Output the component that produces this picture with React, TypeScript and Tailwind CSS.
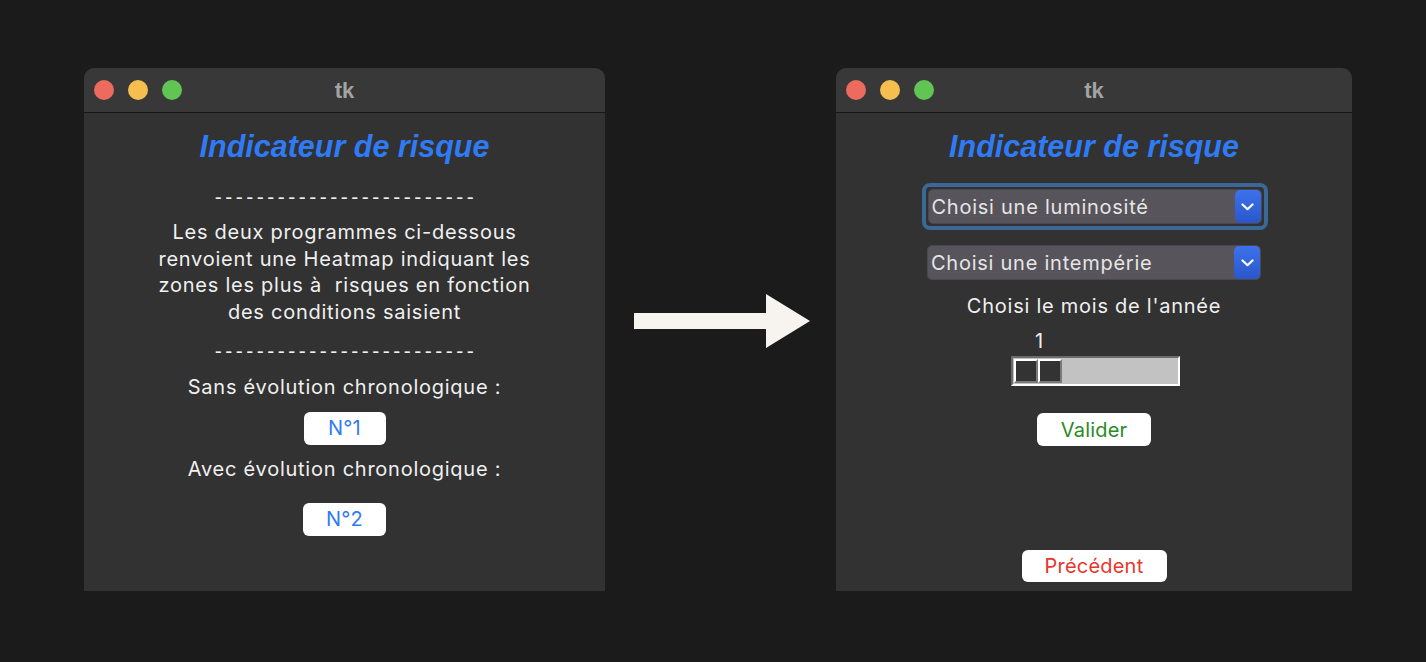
import React from 'react';

const sysFont = "font-['Inter','Liberation_Sans',sans-serif] tracking-[0.75px]";
const btnFont = "font-['Inter','Liberation_Sans',sans-serif] tracking-[0.2px]";

const TitleBar = ({ title }: { title: string }) => (
  <div className="relative h-[45px] flex items-center bg-[#383838] rounded-t-[10px] border-b border-[#161616]">
    <div className="flex items-center gap-[14px] pl-[10px]">
      <span className="w-[20px] h-[20px] rounded-full bg-[#ed6a5e]" />
      <span className="w-[20px] h-[20px] rounded-full bg-[#f5bf4f]" />
      <span className="w-[20px] h-[20px] rounded-full bg-[#61c554]" />
    </div>
    <div className="absolute inset-0 flex items-center justify-center pointer-events-none">
      <span className="font-['Liberation_Sans',sans-serif] font-bold text-[22px] text-[#a3a3a3]">{title}</span>
    </div>
  </div>
);

const Heading = () => (
  <div className="h-[36px] leading-[36px] font-['Liberation_Sans',sans-serif] font-bold italic text-[30.5px] text-[#2f7bf5]">
    Indicateur de risque
  </div>
);

const Dashes = ({ className = '' }: { className?: string }) => (
  <div className={`h-[27px] leading-[27px] text-[21px] text-[#f0f0f0] tracking-[3.5px] pl-[3px] font-['Liberation_Sans',sans-serif] ${className}`}>
    -------------------------
  </div>
);

const TkButton = ({ label, color, w, h = 'h-[33px]', className = '' }: { label: string; color: string; w: string; h?: string; className?: string }) => (
  <button className={`${w} ${h} bg-white rounded-[6px] text-[20px] ${color} ${btnFont} ${className}`}>
    {label}
  </button>
);

const Chevron = () => (
  <svg width="13" height="8" viewBox="0 0 13 8" fill="none">
    <path d="M1.5 1.5 L6.5 6.2 L11.5 1.5" stroke="white" strokeWidth="2.2" strokeLinecap="round" strokeLinejoin="round" />
  </svg>
);

const Combo = ({ label }: { label: string }) => (
  <div className="w-[334px] h-[35px] flex items-center bg-[#57545b] rounded-[5px] border border-[#4a474e]">
    <span className={`flex-1 pl-[3px] text-[20px] text-[#e6e6e6] ${sysFont}`}>{label}</span>
    <div className="w-[26px] h-full rounded-[5px] bg-gradient-to-b from-[#3d72ec] to-[#2a57cb] flex items-center justify-center">
      <Chevron />
    </div>
  </div>
);

const Thumb = () => (
  <div className="w-[24px] border-t-[2px] border-l-[2px] border-t-white border-l-white border-b-[2px] border-r-[2px] border-b-[#7a7a7a] border-r-[#7a7a7a] bg-[#333333]" />
);

const MonthScale = () => (
  <div className="w-[169px] flex flex-col ml-[3px]">
    <div className={`h-[27px] leading-[27px] text-[20px] text-[#f0f0f0] pl-[24px] ${sysFont}`}>1</div>
    <div className="mt-[1px] h-[30px] border-t-[2px] border-l-[2px] border-t-[#6b6b6b] border-l-[#6b6b6b] border-b-[2px] border-r-[2px] border-b-white border-r-white bg-[#c2c2c2] flex items-stretch p-[1px]">
      <div className="flex">
        <Thumb />
        <Thumb />
      </div>
    </div>
  </div>
);

export default function App() {
  return (
    <div className="w-[1426px] h-[662px] bg-[#1b1b1b] flex items-start pl-[84px] pt-[68px]">
      {/* window 1 */}
      <div className="w-[521px] h-[523px] flex flex-col">
        <TitleBar title="tk" />
        <div className="flex-1 bg-[#323232] flex flex-col items-center pt-[15px]">
          <Heading />
          <Dashes className="mt-[19px]" />
          <div className={`mt-[9px] text-center text-[20px] leading-[26.7px] text-[#f0f0f0] ${sysFont}`}>
            Les deux programmes ci-dessous<br />
            renvoient une Heatmap indiquant les<br />
            zones les plus à&nbsp; risques en fonction<br />
            des conditions saisient
          </div>
          <Dashes className="mt-[11px]" />
          <div className={`mt-[10px] h-[27px] leading-[27px] text-[20px] text-[#f0f0f0] ${sysFont}`}>Sans évolution chronologique :</div>
          <TkButton label="N°1" color="text-[#2f7bf5]" w="w-[82px]" className="mt-[11px]" />
          <div className={`mt-[11px] h-[27px] leading-[27px] text-[20px] text-[#f0f0f0] ${sysFont}`}>Avec évolution chronologique :</div>
          <TkButton label="N°2" color="text-[#2f7bf5]" w="w-[83px]" className="mt-[20px]" />
        </div>
      </div>

      {/* arrow */}
      <div className="ml-[29px] mr-[26px] mt-[226px]">
        <svg width="176" height="54" viewBox="0 0 176 54">
          <polygon points="0,19 132,19 132,0 176,27 132,54 132,35 0,35" fill="#f7f4ef" />
        </svg>
      </div>

      {/* window 2 */}
      <div className="w-[516px] h-[523px] flex flex-col">
        <TitleBar title="tk" />
        <div className="flex-1 bg-[#323232] flex flex-col items-center pt-[15px]">
          <Heading />
          <div className="mt-[19px] p-[2px] border-[4px] border-[#3b6896] rounded-[8px] ml-[1px]">
            <Combo label="Choisi une luminosité" />
          </div>
          <div className="mt-[15px]">
            <Combo label="Choisi une intempérie" />
          </div>
          <div className={`mt-[13px] h-[27px] leading-[27px] text-[20px] text-[#f0f0f0] ${sysFont}`}>Choisi le mois de l'année</div>
          <div className="mt-[8px]">
            <MonthScale />
          </div>
          <TkButton label="Valider" color="text-[#2b8a26]" w="w-[114px]" className="mt-[27px]" />
          <TkButton label="Précédent" color="text-[#e8362b]" w="w-[145px]" h="h-[32px]" className="mt-[104px]" />
        </div>
      </div>
    </div>
  );
}
